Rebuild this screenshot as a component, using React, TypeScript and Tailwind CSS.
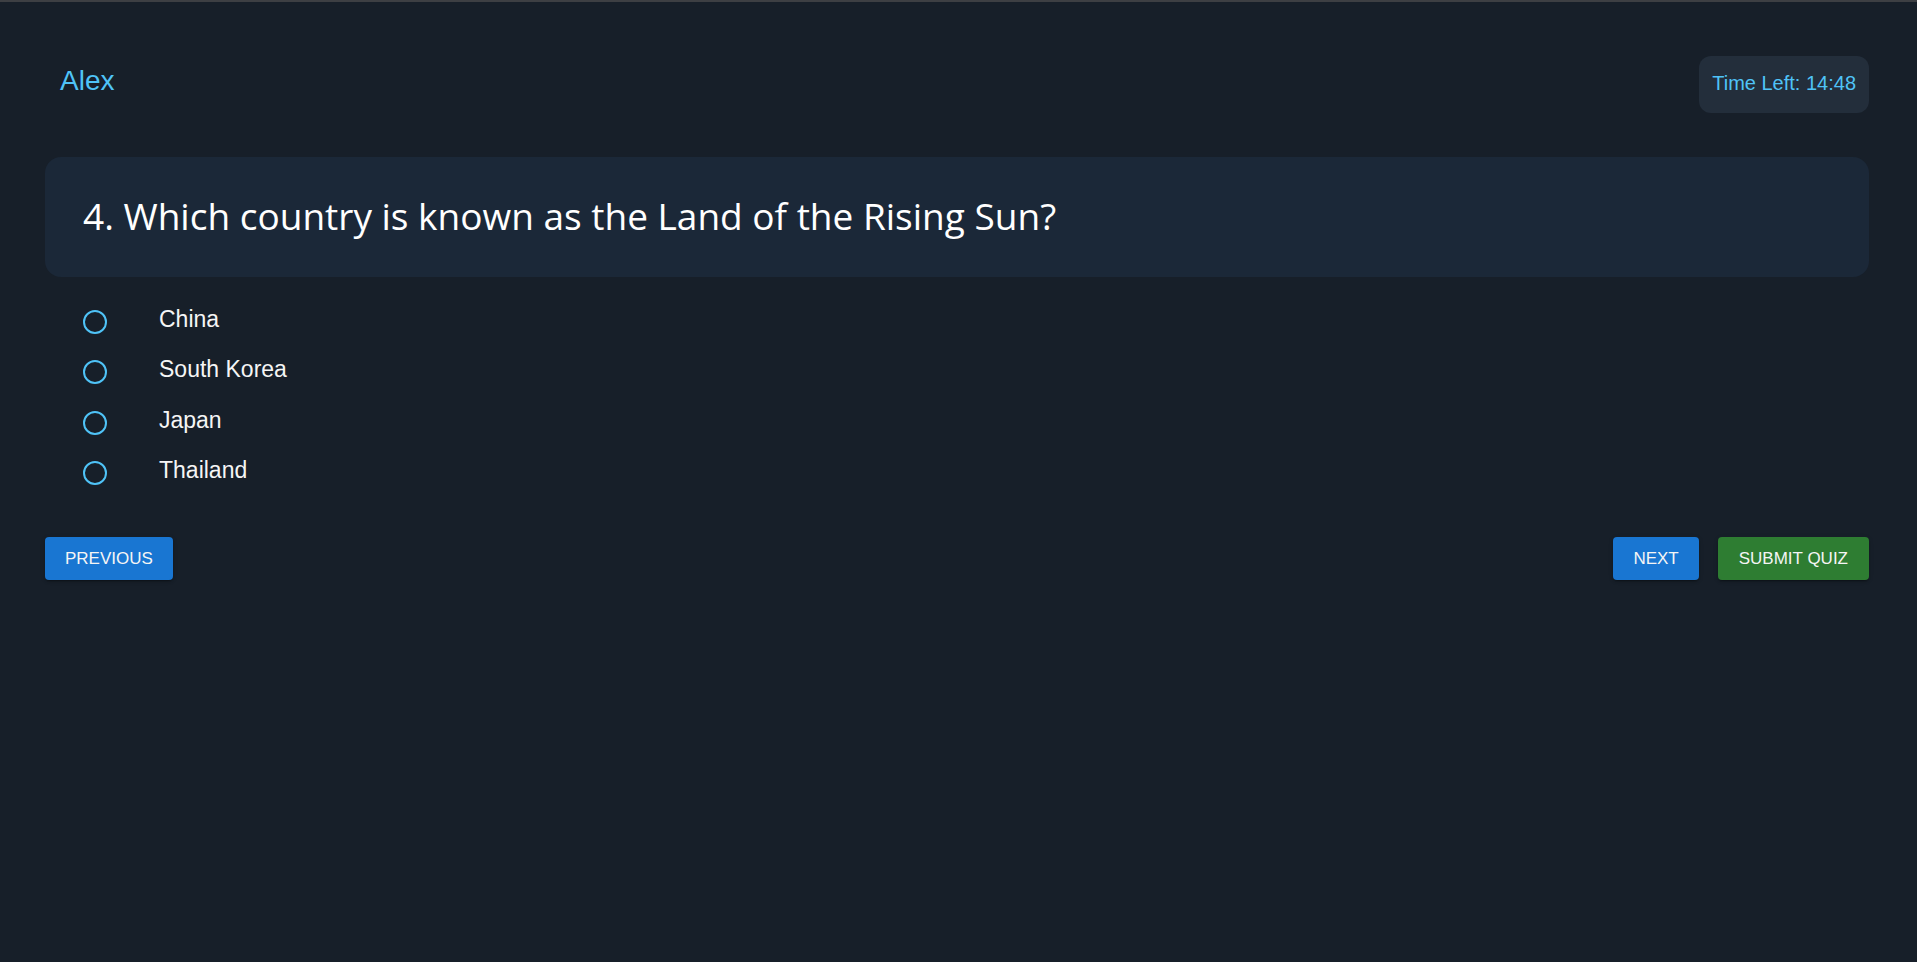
import React from "react";

const options = ["China", "South Korea", "Japan", "Thailand"];

const shadow =
  "shadow-[0_3px_1px_-2px_rgba(0,0,0,0.2),0_2px_2px_0_rgba(0,0,0,0.14),0_1px_5px_0_rgba(0,0,0,0.12)]";

export default function App() {
  return (
    <div className="min-h-screen w-full bg-[#171f29] border-t-2 border-[#3d3f43] font-['Liberation_Sans',Arial,sans-serif]">
      <div className="pl-[45px] pr-[48px] pt-[54px]">
        <div className="flex justify-between items-start">
          <div className="pl-[15px] mt-[7px] h-[36px] leading-[36px] text-[28px] text-[#4fc3f7]">Alex</div>
          <div className="h-[57px] pl-[13px] pr-[13px] pb-[4px] flex items-center rounded-[12px] bg-[#232e3b] text-[20px] text-[#4fc3f7]">
            Time Left: 14:48
          </div>
        </div>

        <div className="mt-[44px] h-[120px] rounded-[16px] bg-[#1b2838] flex items-center pl-[38px] pb-[2px]">
          <h2 className="text-[37px] text-white font-normal font-['Open_Sans','Noto_Sans',sans-serif]">
            4. Which country is known as the Land of the Rising Sun?
          </h2>
        </div>

        <div className="mt-[19.5px] flex flex-col">
          {options.map((o) => (
            <label key={o} className="h-[50.5px] flex items-center pl-[38px] cursor-pointer">
              <span className="w-[24px] h-[24px] rounded-full border-[2.5px] border-[#4fc3f7] shrink-0" />
              <span className="ml-[52px] mb-[6px] text-[23px] text-[#f5f5f5]">{o}</span>
            </label>
          ))}
        </div>

        <div className="mt-[38.5px] flex justify-between items-center">
          <button className={`h-[43px] px-[20px] rounded-[4px] bg-[#1976d2] text-[#f5f5f5] text-[17px] uppercase ${shadow}`}>
            Previous
          </button>
          <div className="flex gap-[19px]">
            <button className={`h-[43px] px-[20px] rounded-[4px] bg-[#1976d2] text-[#f5f5f5] text-[17px] uppercase ${shadow}`}>
              Next
            </button>
            <button className={`h-[43px] px-[21px] rounded-[4px] bg-[#2e7d32] text-[#f5f5f5] text-[17px] uppercase ${shadow}`}>
              Submit Quiz
            </button>
          </div>
        </div>
      </div>
    </div>
  );
}
